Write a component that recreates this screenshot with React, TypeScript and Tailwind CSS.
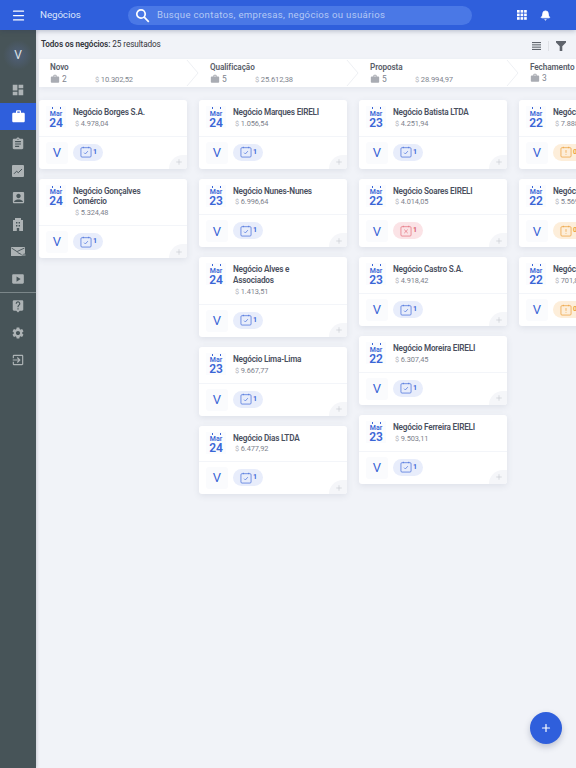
import React from "react";
import { Menu, Bell, Plus } from "lucide-react";
import { MdDashboard, MdWork, MdAssignment, MdLiveHelp, MdSettings, MdExitToApp, MdAccountBox, MdSmartDisplay } from "react-icons/md";

type Deal = { m: string; d: string; t: string; v: string; s?: "ok" | "bad" | "warn" };

const cols: { x: string; deals: Deal[] }[] = [
  { x: "a", deals: [
    { m: "Mar", d: "24", t: "Negócio Borges S.A.", v: "4.978,04" },
    { m: "Mar", d: "24", t: "Negócio Gonçalves Comércio", v: "5.324,48" },
  ]},
  { x: "b", deals: [
    { m: "Mar", d: "24", t: "Negócio Marques EIRELI", v: "1.056,54" },
    { m: "Mar", d: "23", t: "Negócio Nunes-Nunes", v: "6.996,64" },
    { m: "Mar", d: "24", t: "Negócio Alves e Associados", v: "1.413,51" },
    { m: "Mar", d: "23", t: "Negócio Lima-Lima", v: "9.667,77" },
    { m: "Mar", d: "24", t: "Negócio Dias LTDA", v: "6.477,92" },
  ]},
  { x: "c", deals: [
    { m: "Mar", d: "23", t: "Negócio Batista LTDA", v: "4.251,94" },
    { m: "Mar", d: "22", t: "Negócio Soares EIRELI", v: "4.014,05", s: "bad" },
    { m: "Mar", d: "23", t: "Negócio Castro S.A.", v: "4.918,42" },
    { m: "Mar", d: "22", t: "Negócio Moreira EIRELI", v: "6.307,45" },
    { m: "Mar", d: "23", t: "Negócio Ferreira EIRELI", v: "9.503,11" },
  ]},
  { x: "d", deals: [
    { m: "Mar", d: "22", t: "Negócio Pereira", v: "7.888,10", s: "warn" },
    { m: "Mar", d: "22", t: "Negócio Santos", v: "5.569,20", s: "warn" },
    { m: "Mar", d: "22", t: "Negócio Souza", v: "701,80", s: "warn" },
  ]},
];

const stages = [
  { n: "Novo", c: "2", v: "10.302,52" },
  { n: "Qualificação", c: "5", v: "25.612,38" },
  { n: "Proposta", c: "5", v: "28.994,97" },
  { n: "Fechamento", c: "3", v: "" },
];

function Task({ s = "ok" }: { s?: "ok" | "bad" | "warn" }) {
  const color = s === "bad" ? "#e5737f" : s === "warn" ? "#eda23e" : "#4a72dc";
  const bg = s === "bad" ? "bg-[#fbe3e6]" : s === "warn" ? "bg-[#fdeeda]" : "bg-[#e8edfb]";
  const txt = s === "bad" ? "text-[#d9606d]" : s === "warn" ? "text-[#eda23e]" : "text-[#3f6ad8]";
  return (
    <div className={`-mt-[1px] flex h-[17px] w-[30px] shrink-0 items-center gap-[1px] rounded-full pl-[7px] ${bg}`}>
      <svg width="12" height="12" viewBox="0 0 13 13" fill="none" stroke={color} strokeWidth="0.8">
        <rect x="1" y="1.8" width="11" height="10.2" rx="1.2" />
        <path d="M3.6 0.8v1.6M9.4 0.8v1.6" />
        {s === "ok" && <path d="M4.4 7.2l1.4 1.4 2.7-3" />}
        {s === "bad" && <path d="M4.6 5l3.8 3.8M8.4 5L4.6 8.8" />}
        {s === "warn" && <path d="M6.5 4.4v3M6.5 8.6v.8" />}
      </svg>
      <span className={`text-[7px] font-bold leading-none ${txt}`}>{s === "warn" ? "0" : "1"}</span>
    </div>
  );
}

function Card({ deal }: { deal: Deal }) {
  return (
    <div className="relative w-[148px] shrink-0 overflow-hidden rounded-[3px] bg-white shadow-[0_2px_6px_rgba(70,80,110,0.1)]">
      <div className="flex gap-[7px] border-b border-[#f3f5f9] pb-[7px] pl-[7px] pr-1 pt-[7px]">
        <div className="-mt-[1px] flex h-[22px] w-[20px] shrink-0 flex-col items-center bg-[#fbfcfe] pt-[1px] text-[#3a66d6]">
          <div className="flex h-[2px] w-[9px] justify-between">
            <i className="h-[2px] w-[1px] bg-[#3a66d6]" />
            <i className="h-[2px] w-[1px] bg-[#3a66d6]" />
          </div>
          <span className="mt-[1.5px] text-[7px] font-semibold leading-[7px]">{deal.m}</span>
          <span className="text-[12px] font-semibold leading-[10.5px]">{deal.d}</span>
        </div>
        <div className="min-w-0 max-w-[92px]">
          <div className="text-[8.2px] font-semibold leading-[10.7px] tracking-[-0.2px] text-[#4a4f5e]">{deal.t}</div>
          <div className="whitespace-nowrap pl-[2px] text-[7.4px] leading-[11px] tracking-[-0.1px] text-[#7d818c]"><span className="text-[#b3b6be]">$</span> {deal.v}</div>
        </div>
      </div>
      <div className="flex h-[32px] items-center gap-[5px] pl-[7px]">
        <div className="flex h-[22px] w-[22px] items-center justify-center rounded-[3px] bg-[#fafbfd] text-[13px] font-normal text-[#3a66d6]">V</div>
        <Task s={deal.s} />
      </div>
      <div className="absolute bottom-0 right-0 flex h-[14px] w-[18px] items-center justify-center rounded-tl-[14px] bg-[#f5f6f9] pl-[2px] pt-[1px] text-[#c8cbd1]">
        <Plus size={8} strokeWidth={2} />
      </div>
    </div>
  );
}

function ChartIcon() {
  return (
    <svg width="14" height="14" viewBox="0 0 14 14">
      <rect x="1" y="1" width="12" height="12" rx="1" fill="currentColor" />
      <path d="M3 9.8l2.6-2.6 1.7 1.5L11 5" fill="none" stroke="#475458" strokeWidth="1" />
    </svg>
  );
}
function BuildingIcon() {
  return (
    <svg width="14" height="15" viewBox="0 0 14 15" fill="currentColor">
      <path d="M4 1h6v2h2v11H8.2v-3H5.8v3H2V3h2z" />
      <path d="M5 5h1.4v1.4H5zM7.6 5H9v1.4H7.6zM5 8h1.4v1.4H5zM7.6 8H9v1.4H7.6z" fill="#475458" />
    </svg>
  );
}
function BillIcon() {
  return (
    <svg width="16" height="13" viewBox="0 0 16 13" fill="currentColor">
      <path d="M1 2h14v6.5l-2 .5-1.5 2H1z" />
      <path d="M1.5 3l5.5 3.6L14.5 3M7.5 7.5l4 2" fill="none" stroke="#475458" strokeWidth="0.9" />
      <path d="M12 9.5h3.5v1H12z" />
    </svg>
  );
}
function GridIcon() {
  return (
    <svg width="10" height="10" viewBox="0 0 9 9" fill="white">
      {[0, 3.2, 6.4].flatMap((y) => [0, 3.2, 6.4].map((x) => <rect key={`${x}-${y}`} x={x} y={y} width="2.4" height="2.4" />))}
    </svg>
  );
}
function SearchIcon() {
  return (
    <svg width="15" height="15" viewBox="0 0 15 15" fill="none" stroke="white" strokeWidth="1.7">
      <circle cx="6" cy="6" r="4.2" />
      <path d="M9.2 9.2l4.6 4.6" />
    </svg>
  );
}

const side: React.ReactNode[] = [
  <MdDashboard size={14} />,
  <MdWork size={15} />,
  <MdAssignment size={14} />,
  <ChartIcon />,
  <MdAccountBox size={15} />,
  <BuildingIcon />,
  <BillIcon />,
  <MdSmartDisplay size={14} />,
];
const side2 = [MdLiveHelp, MdSettings, MdExitToApp];

export default function App() {
  return (
    <div className="relative flex h-[768px] w-[576px] flex-col overflow-hidden bg-[#f1f3f8] font-['Roboto','Noto_Sans',sans-serif]">
      <header className="z-20 flex h-[30px] shrink-0 items-center bg-[#2f5fdc] shadow-[0_1px_5px_rgba(40,50,90,0.3)]">
        <div className="flex w-[36px] justify-center text-white"><Menu size={15} strokeWidth={2} /></div>
        <span className="ml-[4px] w-[88px] text-[9.8px] tracking-[-0.1px] text-[#dbe5fb]">Negócios</span>
        <div className="flex h-[19px] w-[344px] items-center rounded-full bg-[#4a78e6] pl-[7px] text-[#b4c8f5]">
          <SearchIcon />
          <span className="ml-[7px] whitespace-nowrap text-[9.6px] tracking-[0.3px]">Busque contatos, empresas, negócios ou usuários</span>
        </div>
        <div className="ml-[45px]"><GridIcon /></div>
        <Bell size={11} strokeWidth={2} fill="white" className="ml-[13px] text-white" />
      </header>
      <div className="flex min-h-0 flex-1">
        <aside className="z-10 flex w-[36px] shrink-0 flex-col bg-[#475458] shadow-[1px_0_3px_rgba(40,50,70,0.2)]">
          <div className="flex h-[46px] items-center justify-center pt-[4px] text-[12px] text-[#dfe3e8]">
            <span className="flex h-[30px] w-[30px] items-center justify-center rounded-full bg-[radial-gradient(circle,#50607a_0%,#475458_70%)]">V</span>
          </div>
          {side.map((icon, i) => (
            <div key={i} className={`flex h-[27px] items-center justify-center ${i === 1 ? "bg-[#2f5fdc] text-white" : "text-[#adb3b5]"}`}>
              {icon}
            </div>
          ))}
          <div className="h-px bg-[#7b8689]" />
          <div className="-mt-[1px]">
            {side2.map((I, i) => (
              <div key={i} className="flex h-[27px] items-center justify-center text-[#adb3b5]"><I size={14} /></div>
            ))}
          </div>
        </aside>
        <main className="min-w-0 flex-1 overflow-hidden">
          <div className="flex h-[29px] items-center pl-[5px] pr-[10px] text-[8.2px] tracking-[-0.1px] text-[#33363d]">
            <span className="font-semibold">Todos os negócios:</span><span className="ml-[2px]">25 resultados</span>
            <svg className="ml-auto mt-[3px]" width="9" height="8" viewBox="0 0 9 8" fill="#5f646c">
              <rect y="0" width="9" height="1.1" /><rect y="2.3" width="9" height="1.1" /><rect y="4.6" width="9" height="1.1" /><rect y="6.9" width="9" height="1.1" />
            </svg>
            <span className="mx-[7px] mt-[3px] h-[10px] w-px bg-[#dfe1e6]" />
            <svg className="mt-[3px]" width="10" height="10" viewBox="0 0 10 10" fill="#5f646c"><path d="M0 0h10v1.6L6.3 5.2V10H3.7V5.2L0 1.6z" /></svg>
          </div>
          <div className="ml-[3px] flex h-[28px] w-[600px] bg-white shadow-[0_2px_5px_rgba(70,80,110,0.07)]">
            {stages.map((s, i) => (
              <div key={i} className="relative w-[160px] shrink-0 pl-[11px] pt-[3px] text-[#5a5e69]">
                <div className="text-[8.2px] font-semibold leading-[10.5px] tracking-[-0.1px]">{s.n}</div>
                <div className="flex items-center text-[7.6px] leading-[10px] tracking-[-0.15px] text-[#80848e]">
                  <MdWork size={10} className="text-[#a9acb3]" />
                  <span className="ml-[2px] w-[33px] text-[8.4px]">{s.c}</span>
                  {s.v && <span className="pt-[2px]"><span className="text-[#b3b6be]">$</span> {s.v}</span>}
                </div>
                <svg className="absolute right-[-1px] top-0" width="14" height="28" viewBox="0 0 14 28" fill="none" stroke="#eef0f4"><path d="M1 1l11 13L1 27" /></svg>
              </div>
            ))}
          </div>
          <div className="ml-[3px] mt-[13px] flex w-[620px] items-start gap-[12px]">
            {cols.map((c) => (
              <div key={c.x} className="flex w-[148px] shrink-0 flex-col gap-[10px]">
                {c.deals.map((d) => <Card key={d.t} deal={d} />)}
              </div>
            ))}
          </div>
        </main>
      </div>
      <button className="absolute bottom-[24px] right-[14px] z-30 flex h-[32px] w-[32px] items-center justify-center rounded-full bg-[#2f5fdc] text-white shadow-[0_3px_6px_rgba(40,50,90,0.25)]">
        <Plus size={12} strokeWidth={2.4} />
      </button>
    </div>
  );
}
